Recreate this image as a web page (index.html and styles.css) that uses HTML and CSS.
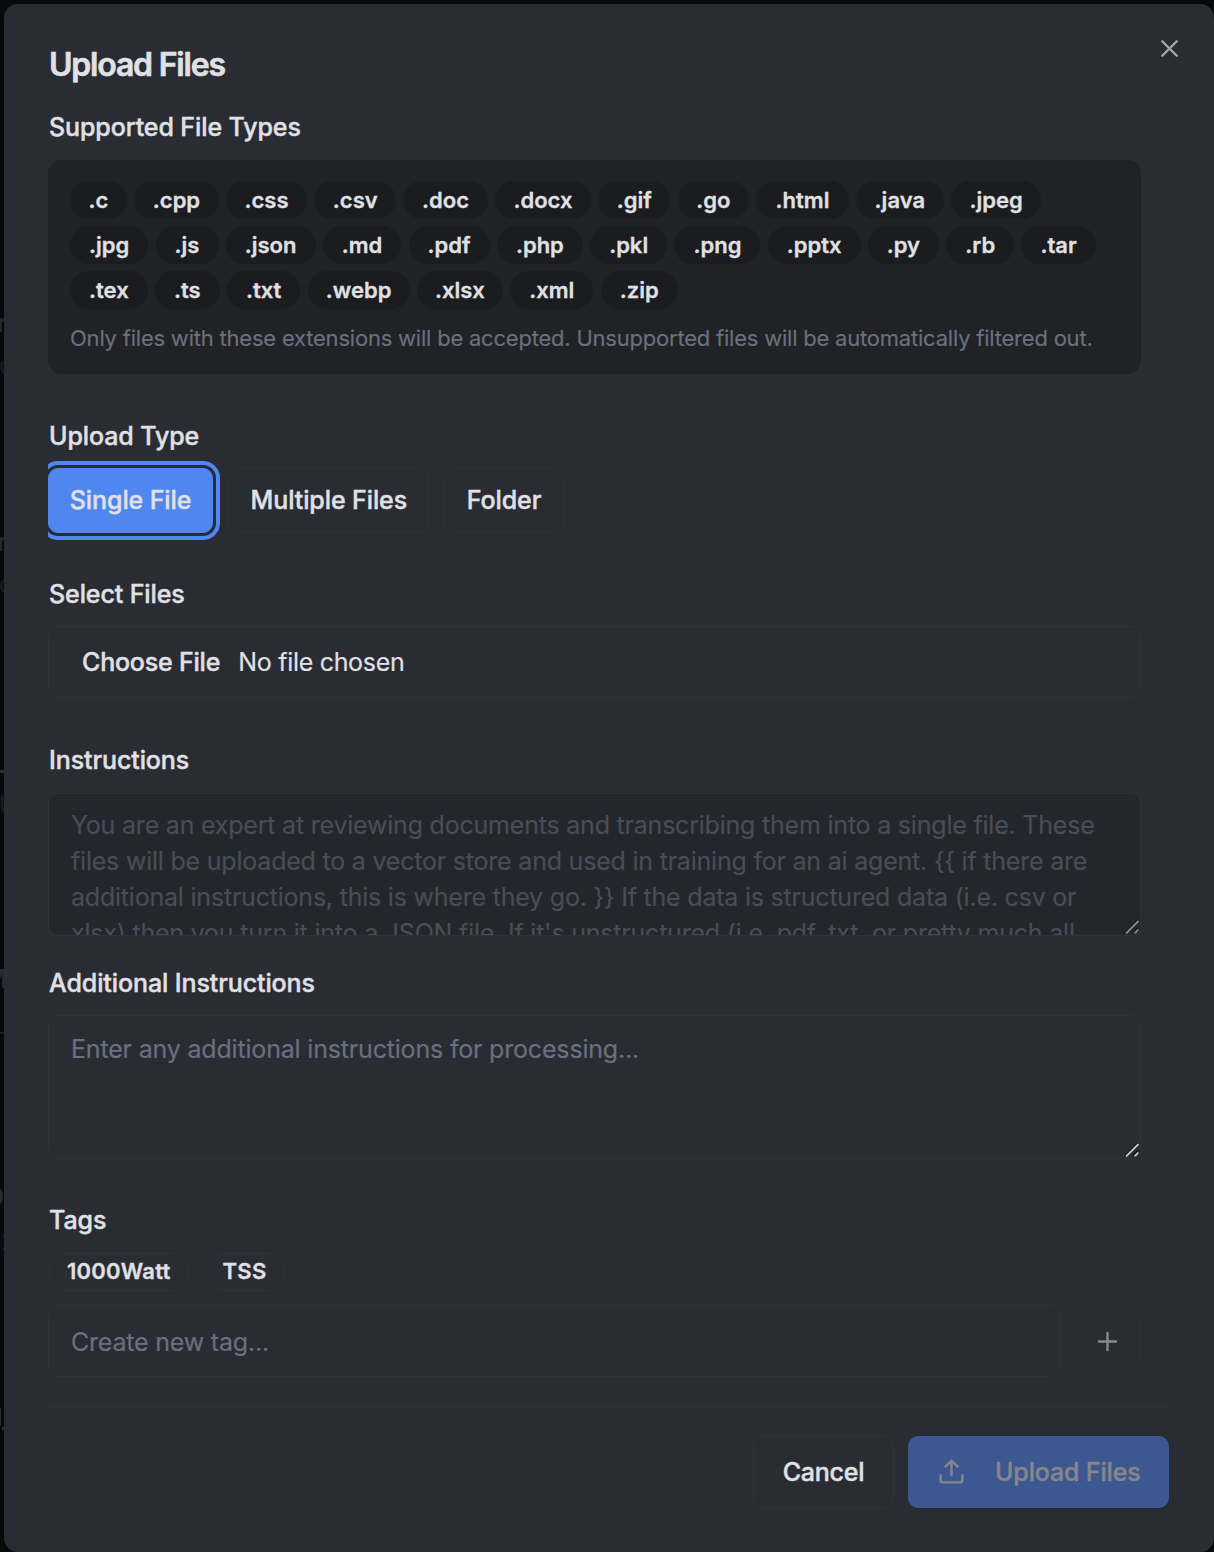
FILE: index.html
```
<!DOCTYPE html>
<html lang="en">
<head>
<meta charset="utf-8">
<title>Upload Files</title>
<link rel="stylesheet" href="styles.css">
</head>
<body>
<div class="behind" aria-hidden="true">
  <span class="ghost ghost-r1">r</span>
  <span class="ghost ghost-o1">o</span>
  <span class="ghost ghost-r2">r</span>
  <span class="ghost ghost-o2">o</span>
  <span class="rule rule-1"></span>
  <span class="ghost ghost-t">t</span>
  <span class="ghost ghost-m">M</span>
  <span class="rule rule-2"></span>
  <span class="ghost ghost-0">0</span>
  <span class="ghost ghost-2">2</span>
  <span class="rule rule-3"></span>
  <span class="rule rule-4"></span>
</div>
<main class="dialog" role="dialog" aria-label="Upload Files">
  <button class="close" aria-label="Close">
    <svg class="icon" viewBox="0 0 24 24"><path d="M18 6 6 18M6 6l12 12"/></svg>
  </button>
  <form class="form">
    <h2 class="title">Upload Files</h2>

    <h3 class="label">Supported File Types</h3>
    <section class="types">
      <div class="chips chips-snug">
        <span class="chip">.c</span><span class="chip">.cpp</span><span class="chip">.css</span><span class="chip">.csv</span><span class="chip">.doc</span><span class="chip">.docx</span><span class="chip">.gif</span><span class="chip">.go</span><span class="chip chip-wide">.html</span><span class="chip">.java</span><span class="chip">.jpeg</span>
      </div>
      <div class="chips">
        <span class="chip">.jpg</span><span class="chip">.js</span><span class="chip">.json</span><span class="chip">.md</span><span class="chip">.pdf</span><span class="chip">.php</span><span class="chip">.pkl</span><span class="chip">.png</span><span class="chip">.pptx</span><span class="chip">.py</span><span class="chip">.rb</span><span class="chip">.tar</span>
      </div>
      <div class="chips">
        <span class="chip">.tex</span><span class="chip">.ts</span><span class="chip">.txt</span><span class="chip chip-snug">.webp</span><span class="chip chip-snug">.xlsx</span><span class="chip">.xml</span><span class="chip">.zip</span>
      </div>
      <p class="hint">Only files with these extensions will be accepted. Unsupported files will be automatically filtered out.</p>
    </section>

    <h3 class="label">Upload Type</h3>
    <div class="choices">
      <button type="button" class="choice choice-active">Single File</button>
      <button type="button" class="choice">Multiple Files</button>
      <button type="button" class="choice">Folder</button>
    </div>

    <h3 class="label">Select Files</h3>
    <div class="file"><span class="file-button">Choose File</span><span>No file chosen</span></div>

    <h3 class="label">Instructions</h3>
    <div class="area area-disabled">
      <textarea class="text" disabled>You are an expert at reviewing documents and transcribing them into a single file. These
files will be uploaded to a vector store and used in training for an ai agent. {{ if there are
additional instructions, this is where they go. }} If the data is structured data (i.e. csv or
xlsx) then you turn it into a JSON file. If it's unstructured (i.e. pdf, txt, or pretty much all</textarea>
      <svg class="grip" viewBox="0 0 16 16"><path class="grip-shade" d="M1 14 14 1M9 14l5-5"/><path d="M2 14.5 14.5 2M10.5 14.5l4-4"/></svg>
    </div>

    <h3 class="label">Additional Instructions</h3>
    <div class="area area-last">
      <textarea class="text" placeholder="Enter any additional instructions for processing..."></textarea>
      <svg class="grip" viewBox="0 0 16 16"><path class="grip-shade" d="M1 14 14 1M9 14l5-5"/><path d="M2 14.5 14.5 2M10.5 14.5l4-4"/></svg>
    </div>

    <h3 class="label">Tags</h3>
    <div class="tags"><span class="tag">1000Watt</span><span class="tag">TSS</span></div>
    <div class="new-tag">
      <input class="tag-input" placeholder="Create new tag...">
      <button type="button" class="add" aria-label="Add tag">
        <svg class="icon" viewBox="0 0 24 24"><path d="M5 12h14M12 5v14"/></svg>
      </button>
    </div>
  </form>
  <footer class="footer">
    <button class="cancel">Cancel</button>
    <button class="submit" disabled>
      <svg class="icon" viewBox="0 0 24 24"><path d="M21 15v4a2 2 0 0 1-2 2H5a2 2 0 0 1-2-2v-4M17 8l-5-5-5 5M12 3v12"/></svg>
      Upload Files
    </button>
  </footer>
</main>
</body>
</html>
```
FILE: styles.css
```
* { box-sizing: border-box; }
body {
  margin: 0;
  height: 1552px;
  padding: 4px 0 0 4px;
  overflow: hidden;
  background: #08090b;
  color: #e0e1e5;
  font: 400 25px/36px Inter, "Liberation Sans", sans-serif;
  -webkit-text-stroke: .15px currentColor;
}
button, input, textarea { font: inherit; color: inherit; margin: 0; }
h2, h3, p { margin: 0; }

/* Page content that shows past the dialog's left edge */
.behind { position: absolute; left: 0; top: 0; width: 4px; height: 1552px; overflow: hidden; color: #292b2d; }
.ghost { position: absolute; line-height: 30px; font-size: 25px; }
.ghost-r1 { top: 308px; right: -3px; }
.ghost-o1 { top: 350px; right: -10px; color: #191b1e; }
.ghost-r2 { top: 527px; right: -3px; }
.ghost-o2 { top: 569px; right: -10px; color: #191b1e; }
.ghost-t { top: 788px; right: -3px; color: #191b1e; }
.ghost-m { top: 964px; right: -3px; font-weight: 600; }
.ghost-0 { top: 1182px; right: 0; font-weight: 600; }
.ghost-2 { top: 1226px; right: -12px; color: #191b1e; }
.rule { position: absolute; left: 0; width: 4px; height: 2px; background: #292b2d; }
.rule-1 { top: 770px; height: 3px; }
.rule-2 { top: 1032px; background: #191b1e; }
.rule-3 { top: 1408px; width: 1px; height: 18px; }
.rule-4 { top: 1427px; left: 2px; width: 2px; height: 3px; }

.dialog {
  position: relative;
  height: 1548px;
  padding: 45px 45px 45px 44px;
  border-radius: 14px;
  background: #2a2c34;
}
.icon { width: 29px; height: 29px; fill: none; stroke: currentColor; stroke-width: 2; stroke-linecap: round; stroke-linejoin: round; }
.close { position: absolute; right: 30px; top: 30px; padding: 0; width: 29px; height: 29px; border: 0; background: none; color: #a4a5a8; }
.close .icon { display: block; }

.form { width: 1093px; overflow: hidden; }
.title { margin-bottom: 28px; padding-left: 1px; font-size: 32px; line-height: 32px; font-weight: 600; letter-spacing: -1.2px; -webkit-text-stroke-width: .6px; }
.label { margin-bottom: 15px; padding-left: 1px; font-size: 25px; font-weight: 500; letter-spacing: -.1px; }
.label, .choice, .file-button, .cancel, .submit { -webkit-text-stroke-width: .4px; }

.types { height: 214px; margin-bottom: 44px; padding: 21px 22px; border-radius: 14px; background: #212226; }
.chips { display: flex; gap: 7.2px; margin-bottom: 7px; }
.chip { height: 38px; padding: 0 19.05px; border-radius: 19px; background: #1b1c20; font-size: 22px; line-height: 38px; font-weight: 600; -webkit-text-stroke-width: .3px; }
.chips-snug .chip { padding: 0 18.6px; }
.chips-snug .chip-wide { padding: 0 19.4px; }
.chips .chip-snug { padding: 0 18.2px; }
.hint { margin-top: 11px; color: #6b7080; font-size: 22px; letter-spacing: -.215px; white-space: nowrap; }

.types + .label, .choices + .label { margin-bottom: 14px; }
.choices { display: flex; gap: 15px; margin-bottom: 43px; }
.choice { height: 65px; padding: 0 21.4px 2px; border: 1px solid #2e3138; border-radius: 10px; background: none; font-weight: 500; letter-spacing: -.1px; }
.choice-active { padding: 0 20.8px 2px; border-color: #5086ef; background: #5086ef; outline: 4px solid #5086ef; outline-offset: 3px; }

.file { display: flex; align-items: center; gap: 18px; height: 72px; margin-bottom: 44px; padding: 0 33px; border: 1px solid #2f3239; border-radius: 10px; letter-spacing: -.3px; }
.file-button { font-weight: 500; letter-spacing: -.2px; }

.area { position: relative; height: 143px; margin-bottom: 29px; border: 1px solid #2f3239; border-radius: 10px; overflow: hidden; }
.area-disabled { background: #24262e; color: #4a4d57; }
.area-last { height: 144px; margin-top: -1px; margin-bottom: 43px; }
.text { display: block; width: 100%; height: 100%; padding: 13px 22px; border: 0; background: none; outline: 0; resize: none; overflow: hidden; white-space: pre; letter-spacing: -.21px; }
.text::placeholder, .tag-input::placeholder { color: #6b7080; opacity: 1; }
.area-last .text { padding-top: 15px; letter-spacing: -.18px; }
.grip { position: absolute; right: 0; bottom: 0; width: 16px; height: 16px; fill: none; stroke: #c0c1c3; stroke-width: 1.8; }
.grip-shade { stroke: #121317; }
.area-disabled .grip { stroke: #85868a; }
.area-disabled .grip-shade { stroke: #181a1f; }

.tags { display: flex; gap: 14px; margin-bottom: 14px; }
.tag { height: 38px; padding: 0 18px; border: 1px solid #2f3239; border-radius: 19px; font-size: 22px; line-height: 35px; font-weight: 600; letter-spacing: .25px; -webkit-text-stroke-width: .3px; }
.new-tag { display: flex; gap: 14px; }
.tag-input { flex: 1; min-width: 0; height: 72px; padding: 2px 22px 0; border: 1px solid #2f3239; border-radius: 10px; background: none; letter-spacing: -.2px; }
.add { display: grid; place-items: center; width: 67px; height: 72px; padding: 0; border: 1px solid #2c2f36; border-radius: 10px; background: none; color: #87888d; }

.footer { display: flex; justify-content: flex-end; gap: 14px; margin-top: 29px; padding-top: 29px; border-top: 1px solid #2f3239; }
.cancel { width: 141px; height: 72px; padding: 0; border: 1px solid #2f3239; border-radius: 10px; background: none; font-weight: 500; letter-spacing: -.25px; }
.submit { display: flex; align-items: center; gap: 29px; width: 261px; height: 72px; padding: 0 0 0 29px; border: 0; border-radius: 10px; background: #3d5790; color: #85868c; font-weight: 500; letter-spacing: -.15px; white-space: nowrap; }
.submit .icon { margin-top: -2px; }
```
